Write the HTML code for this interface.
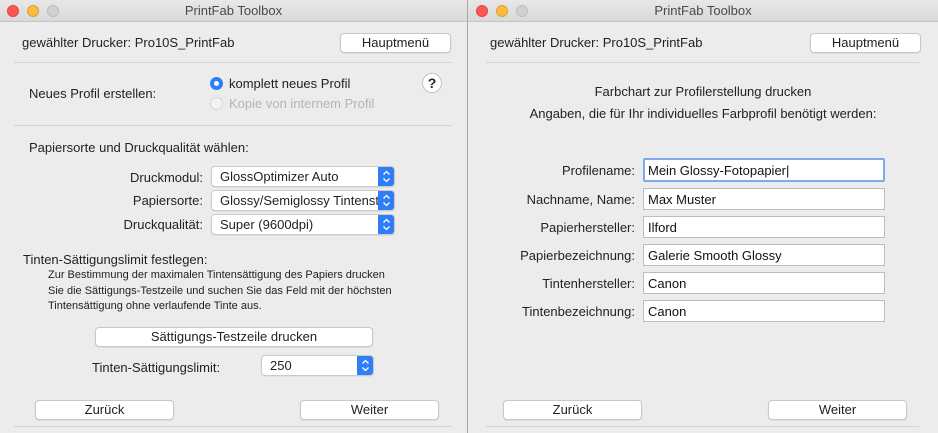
<!DOCTYPE html>
<html><head><meta charset="utf-8"><style>
*{margin:0;padding:0;box-sizing:border-box}
body{width:938px;height:433px;background:#ececec;font-family:"Liberation Sans",sans-serif;font-size:13px;color:#222;position:relative;overflow:hidden}
.a{position:absolute;white-space:nowrap}
.tb{position:absolute;top:0;height:22px;background:linear-gradient(#e8e8e8,#d9d9d9);border-bottom:1px solid #c4c4c4;text-align:center;line-height:22px;color:#4a4a4a;font-size:13px}
.dot{position:absolute;top:5px;width:12px;height:12px;border-radius:50%}
.r{background:#fc5753;border:1px solid #df4744}.y{background:#fdbc40;border:1px solid #de9f34}.g{background:#d0d0d0;border:1px solid #bdbdbd}
.btn{position:absolute;background:#fff;border:1px solid #c8c8c8;border-radius:4px;text-align:center;line-height:18px;height:20px;box-shadow:0 .5px 1px rgba(0,0,0,.12);font-size:13px}
.sep{position:absolute;height:1px;background:#d4d4d4}
.pop{position:absolute;background:#fff;border:1px solid #cacaca;border-radius:4px;height:21px;line-height:19px;padding-left:8px;overflow:hidden;box-shadow:0 .5px 1px rgba(0,0,0,.1)}
.st{position:absolute;right:-1px;top:-1px;width:17px;height:21px;background:#2f7df7;border-radius:0 4px 4px 0}
.lbl{position:absolute;text-align:right;white-space:nowrap}
.fld{position:absolute;left:643px;width:242px;height:22px;background:#fff;border:1px solid #bdbdbd;line-height:21px;padding-left:4px;color:#111}
.sm{font-size:11px;line-height:15.5px}
</style></head><body>
<!-- left window -->
<div class="tb" style="left:0;width:467px">PrintFab Toolbox</div>
<div class="dot r" style="left:7px"></div><div class="dot y" style="left:27px"></div><div class="dot g" style="left:47px"></div>
<div style="position:absolute;left:467px;top:0;width:1px;height:433px;background:#a8a8a8"></div>
<div class="a" style="left:22px;top:35px">gewählter Drucker: Pro10S_PrintFab</div>
<div class="btn" style="left:340px;top:33px;width:111px">Hauptmenü</div>
<div class="sep" style="left:14px;top:62px;width:438px"></div>
<div class="a" style="left:29px;top:86px">Neues Profil erstellen:</div>
<div style="position:absolute;left:210px;top:77px;width:13px;height:13px;border-radius:50%;background:#2f7df7"><div style="position:absolute;left:4px;top:4px;width:5px;height:5px;border-radius:50%;background:#fff"></div></div>
<div class="a" style="left:229px;top:76px">komplett neues Profil</div>
<div style="position:absolute;left:210px;top:97px;width:13px;height:13px;border-radius:50%;background:#f3f3f3;border:1px solid #d6d6d6"></div>
<div class="a" style="left:229px;top:96px;color:#b4b4b4">Kopie von internem Profil</div>
<div style="position:absolute;left:422px;top:73px;width:20px;height:20px;border-radius:50%;background:#fff;border:1px solid #c4c4c4;text-align:center;line-height:18px;font-weight:bold;font-size:14px">?</div>
<div class="sep" style="left:14px;top:125px;width:438px"></div>
<div class="a" style="left:29px;top:140px">Papiersorte und Druckqualität wählen:</div>
<div class="lbl" style="right:735px;top:170px">Druckmodul:</div>
<div class="pop" style="left:211px;top:166px;width:184px">GlossOptimizer Auto<div class="st"><svg width="17" height="21"><path d="M5.5 8.5L8.5 5.5L11.5 8.5M5.5 12.5L8.5 15.5L11.5 12.5" stroke="#fff" stroke-width="1.3" fill="none"/></svg></div></div>
<div class="lbl" style="right:735px;top:193px">Papiersorte:</div>
<div class="pop" style="left:211px;top:190px;width:184px">Glossy/Semiglossy Tintenst<div class="st"><svg width="17" height="21"><path d="M5.5 8.5L8.5 5.5L11.5 8.5M5.5 12.5L8.5 15.5L11.5 12.5" stroke="#fff" stroke-width="1.3" fill="none"/></svg></div></div>
<div class="lbl" style="right:735px;top:217px">Druckqualität:</div>
<div class="pop" style="left:211px;top:214px;width:184px">Super (9600dpi)<div class="st"><svg width="17" height="21"><path d="M5.5 8.5L8.5 5.5L11.5 8.5M5.5 12.5L8.5 15.5L11.5 12.5" stroke="#fff" stroke-width="1.3" fill="none"/></svg></div></div>
<div class="a" style="left:23px;top:252px">Tinten-Sättigungslimit festlegen:</div>
<div class="a sm" style="left:48px;top:268px">Zur Bestimmung der maximalen Tintensättigung des Papiers drucken<br>Sie die Sättigungs-Testzeile und suchen Sie das Feld mit der höchsten<br>Tintensättigung ohne verlaufende Tinte aus.</div>
<div class="btn" style="left:95px;top:327px;width:278px">Sättigungs-Testzeile drucken</div>
<div class="a" style="left:92px;top:360px">Tinten-Sättigungslimit:</div>
<div class="pop" style="left:261px;top:355px;width:113px">250<div class="st"><svg width="17" height="21"><path d="M5.5 8.5L8.5 5.5L11.5 8.5M5.5 12.5L8.5 15.5L11.5 12.5" stroke="#fff" stroke-width="1.3" fill="none"/></svg></div></div>
<div class="btn" style="left:35px;top:400px;width:139px">Zurück</div>
<div class="btn" style="left:300px;top:400px;width:139px">Weiter</div>
<div class="sep" style="left:14px;top:426px;width:438px"></div>
<!-- right window -->
<div class="tb" style="left:468px;width:470px">PrintFab Toolbox</div>
<div class="dot r" style="left:476px"></div><div class="dot y" style="left:496px"></div><div class="dot g" style="left:516px"></div>
<div class="a" style="left:490px;top:35px">gewählter Drucker: Pro10S_PrintFab</div>
<div class="btn" style="left:810px;top:33px;width:111px">Hauptmenü</div>
<div class="sep" style="left:486px;top:62px;width:433px"></div>
<div class="a" style="left:468px;width:470px;text-align:center;top:84px">Farbchart zur Profilerstellung drucken</div>
<div class="a" style="left:468px;width:470px;text-align:center;top:106px">Angaben, die für Ihr individuelles Farbprofil benötigt werden:</div>
<div class="lbl" style="right:303px;top:163px">Profilename:</div>
<div class="fld" style="top:158px;height:24px;border:2px solid #7fa9ea;border-radius:2px;line-height:21px;padding-left:3px">Mein Glossy-Fotopapier|</div>
<div class="lbl" style="right:303px;top:192px">Nachname, Name:</div><div class="fld" style="top:188px">Max Muster</div>
<div class="lbl" style="right:303px;top:220px">Papierhersteller:</div><div class="fld" style="top:216px">Ilford</div>
<div class="lbl" style="right:303px;top:248px">Papierbezeichnung:</div><div class="fld" style="top:244px">Galerie Smooth Glossy</div>
<div class="lbl" style="right:303px;top:276px">Tintenhersteller:</div><div class="fld" style="top:272px">Canon</div>
<div class="lbl" style="right:303px;top:304px">Tintenbezeichnung:</div><div class="fld" style="top:300px">Canon</div>
<div class="btn" style="left:503px;top:400px;width:139px">Zurück</div>
<div class="btn" style="left:768px;top:400px;width:139px">Weiter</div>
<div class="sep" style="left:486px;top:426px;width:433px"></div>
</body></html>
